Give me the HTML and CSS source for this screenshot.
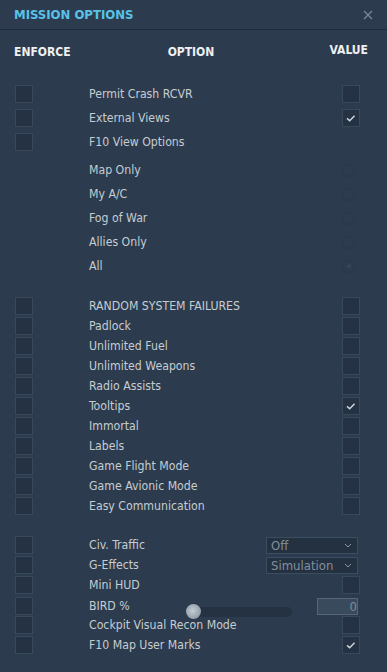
FILE: index.html
```html
<!DOCTYPE html>
<html>
<head>
<meta charset="utf-8">
<link rel="stylesheet" href="styles.css">
</head>
<body>
<div class="panel">
  <div class="titlebar">
    <span class="title">MISSION OPTIONS</span>
    <svg class="close" width="10" height="10" viewBox="0 0 10 10"><path d="M1 1L9 9M9 1L1 9" stroke="#7c8895" stroke-width="1.2" fill="none"/></svg>
  </div>
  <div class="colheads">
    <span class="ch ch-enforce">ENFORCE</span>
    <span class="ch ch-option">OPTION</span>
    <span class="ch ch-value">VALUE</span>
  </div>

  <div class="group g1">
    <div class="row"><span class="cb"></span><span class="label">Permit Crash RCVR</span><span class="val"><span class="cb"></span></span></div>
    <div class="row"><span class="cb"></span><span class="label">External Views</span><span class="val"><span class="cb"><svg viewBox="0 0 18 18"><path d="M4.5 9.5L7.5 12L13 6.5"/></svg></span></span></div>
    <div class="row"><span class="cb"></span><span class="label">F10 View Options</span><span class="val"></span></div>
  </div>

  <div class="group g-radio">
    <div class="row"><span></span><span class="label">Map Only</span><span class="val"><span class="radio"></span></span></div>
    <div class="row"><span></span><span class="label">My A/C</span><span class="val"><span class="radio"></span></span></div>
    <div class="row"><span></span><span class="label">Fog of War</span><span class="val"><span class="radio"></span></span></div>
    <div class="row"><span></span><span class="label">Allies Only</span><span class="val"><span class="radio"></span></span></div>
    <div class="row"><span></span><span class="label">All</span><span class="val"><span class="radio on"></span></span></div>
  </div>

  <div class="group g2">
    <div class="row"><span class="cb"></span><span class="label">RANDOM SYSTEM FAILURES</span><span class="val"><span class="cb"></span></span></div>
    <div class="row"><span class="cb"></span><span class="label">Padlock</span><span class="val"><span class="cb"></span></span></div>
    <div class="row"><span class="cb"></span><span class="label">Unlimited Fuel</span><span class="val"><span class="cb"></span></span></div>
    <div class="row"><span class="cb"></span><span class="label">Unlimited Weapons</span><span class="val"><span class="cb"></span></span></div>
    <div class="row"><span class="cb"></span><span class="label">Radio Assists</span><span class="val"><span class="cb"></span></span></div>
    <div class="row"><span class="cb"></span><span class="label">Tooltips</span><span class="val"><span class="cb"><svg viewBox="0 0 18 18"><path d="M4.5 9.5L7.5 12L13 6.5"/></svg></span></span></div>
    <div class="row"><span class="cb"></span><span class="label">Immortal</span><span class="val"><span class="cb"></span></span></div>
    <div class="row"><span class="cb"></span><span class="label">Labels</span><span class="val"><span class="cb"></span></span></div>
    <div class="row"><span class="cb"></span><span class="label">Game Flight Mode</span><span class="val"><span class="cb"></span></span></div>
    <div class="row"><span class="cb"></span><span class="label">Game Avionic Mode</span><span class="val"><span class="cb"></span></span></div>
    <div class="row"><span class="cb"></span><span class="label">Easy Communication</span><span class="val"><span class="cb"></span></span></div>
  </div>

  <div class="group g3">
    <div class="row"><span class="cb"></span><span class="label">Civ. Traffic</span><span class="val"><span class="select"><span>Off</span><svg width="8" height="5" viewBox="0 0 8 5"><path d="M1 1L4 4L7 1"/></svg></span></span></div>
    <div class="row"><span class="cb"></span><span class="label">G-Effects</span><span class="val"><span class="select"><span>Simulation</span><svg width="8" height="5" viewBox="0 0 8 5"><path d="M1 1L4 4L7 1"/></svg></span></span></div>
    <div class="row"><span class="cb"></span><span class="label">Mini HUD</span><span class="val"><span class="cb"></span></span></div>
    <div class="row"><span class="cb"></span><span class="label">BIRD %</span><span class="val bird"><span class="slider"><span class="thumb"></span></span><span class="numbox">0</span></span></div>
    <div class="row"><span class="cb"></span><span class="label">Cockpit Visual Recon Mode</span><span class="val"><span class="cb"></span></span></div>
    <div class="row"><span class="cb"></span><span class="label">F10 Map User Marks</span><span class="val"><span class="cb"><svg viewBox="0 0 18 18"><path d="M4.5 9.5L7.5 12L13 6.5"/></svg></span></span></div>
  </div>
</div>
</body>
</html>
```

FILE: styles.css
```css
html, body {
  margin: 0;
  padding: 0;
  background: #2c3c4e;
}
body {
  width: 387px;
  height: 672px;
  overflow: hidden;
  font-family: "DejaVu Sans Condensed", "DejaVu Sans", sans-serif;
  font-stretch: condensed;
}
.panel {
  display: flex;
  flex-direction: column;
}
.titlebar {
  height: 29px;
  border-bottom: 1px solid #1f2b39;
  display: flex;
  align-items: center;
  justify-content: space-between;
  padding: 0 14px 0 14px;
}
.title {
  color: #58c2e8;
  font-weight: bold;
  font-size: 13px;
}
.close {
  display: block;
}
.colheads {
  margin-top: 12px;
  height: 20px;
  display: grid;
  grid-template-columns: 1fr auto 1fr;
  align-items: center;
  padding: 0 19px 0 14px;
}
.ch {
  color: #eef0f2;
  font-weight: bold;
  font-size: 12px;
}
.ch-value {
  justify-self: end;
  margin-bottom: 4px;
}
.group {
  display: flex;
  flex-direction: column;
}
.g1 { margin-top: 20px; }
.g-radio { margin-top: 4px; }
.g2 { margin-top: 18px; }
.g3 { margin-top: 19px; }
.row {
  display: grid;
  grid-template-columns: 18px 1fr auto;
  column-gap: 56px;
  align-items: center;
  padding: 0 27px 0 15px;
  height: 24px;
}
.g2 .row, .g3 .row { height: 20px; }
.label {
  color: #c6ccd2;
  font-size: 12.2px;
  white-space: nowrap;
}
.val {
  display: flex;
  align-items: center;
  justify-content: flex-end;
}
.cb {
  width: 18px;
  height: 18px;
  box-sizing: border-box;
  background: #243244;
  border: 1px solid #38495c;
  display: block;
}
.cb svg {
  width: 16px;
  height: 16px;
  display: block;
}
.cb svg path {
  fill: none;
  stroke: #cdd2d7;
  stroke-width: 1.7;
}
.radio {
  width: 13px;
  height: 13px;
  box-sizing: border-box;
  border-radius: 50%;
  border: 1px solid #283749;
  margin-right: 5px;
  display: flex;
  align-items: center;
  justify-content: center;
}
.radio.on::after {
  content: "";
  width: 4px;
  height: 4px;
  border-radius: 50%;
  background: #35465b;
}
.select {
  width: 92px;
  height: 17px;
  box-sizing: border-box;
  background: #233141;
  border: 1px solid #3b4d61;
  margin-right: 2px;
  display: flex;
  align-items: center;
  justify-content: space-between;
  padding: 0 5px 0 4px;
  color: #838f9b;
  font-size: 13px;
}
.select svg path {
  fill: none;
  stroke: #8a96a2;
  stroke-width: 1;
}
.slider {
  width: 106px;
  height: 10px;
  border-radius: 5px;
  background: #243241;
  margin-top: 12px;
  margin-right: 25px;
  position: relative;
}
.thumb {
  position: absolute;
  left: 0;
  top: -3px;
  width: 15px;
  height: 15px;
  border-radius: 50%;
  background: radial-gradient(circle at 45% 45%, #c4ccd4 0%, #9aa5b0 60%, #7c8894 100%);
}
.numbox {
  width: 41px;
  height: 17px;
  box-sizing: border-box;
  background: #3a4a5d;
  border: 1px solid #56677a;
  margin-right: 2px;
  color: #7f8b97;
  font-size: 13px;
  text-align: right;
  line-height: 15px;
}
```
